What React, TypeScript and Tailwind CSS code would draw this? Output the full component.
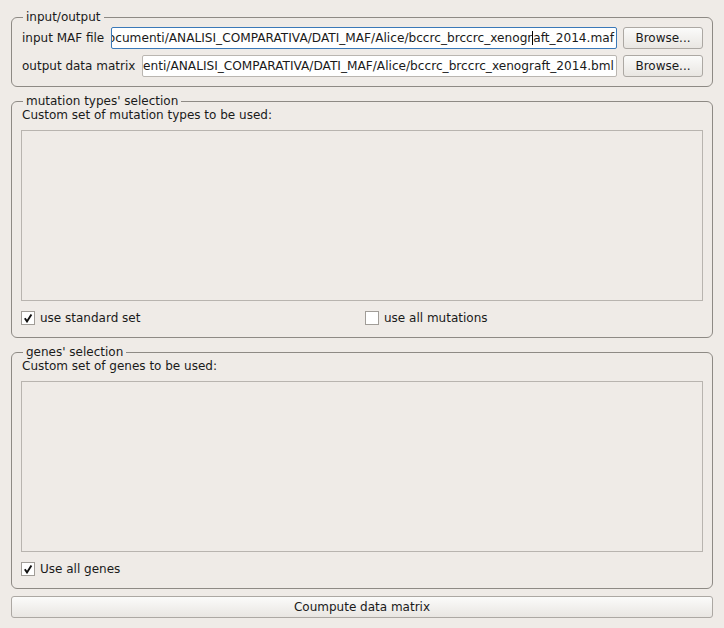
import React from 'react'

const font = { fontFamily: '"DejaVu Sans", "Liberation Sans", sans-serif' }

const Check = ({ checked, label }: { checked: boolean; label: string }) => (
  <label className="flex items-center gap-[5px] h-[16px] leading-[14px]">
    <span className="w-[14px] h-[14px] border border-[#a19d98] bg-white flex items-center justify-center">
      {checked && (
        <svg width="10" height="10" viewBox="0 0 10 10">
          <path d="M1.8 5.2 L4 8.4 L8.4 1.4" fill="none" stroke="#111" strokeWidth="1.9" />
        </svg>
      )}
    </span>
    <span>{label}</span>
  </label>
)

const Group = ({ title, children, className = '' }: { title: string; children: React.ReactNode; className?: string }) => (
  <fieldset className={`min-w-0 border border-[#8e8a85] rounded-[6px] px-[9px] ${className}`}>
    <legend className="ml-[2px] px-[3px] leading-[14px]">{title}</legend>
    {children}
  </fieldset>
)

const Field = ({ text, focused, caretAt }: { text: string; focused?: boolean; caretAt?: number }) => (
  <div
    className={`flex-1 min-w-0 h-[22px] bg-white border rounded-[2px] flex justify-end items-center overflow-hidden pr-[2px] text-[12.15px] ${
      focused ? 'border-[#3b79b8]' : 'border-[#bab6b1]'
    }`}
  >
    <span className="whitespace-nowrap leading-[14px]">
      {caretAt !== undefined ? (
        <>
          {text.slice(0, caretAt)}
          <span className="inline-block w-0 h-[14px] border-l border-black align-[-3px]" />
          {text.slice(caretAt)}
        </>
      ) : (
        text
      )}
    </span>
  </div>
)

const Button = ({ children, className = '' }: { children: React.ReactNode; className?: string }) => (
  <button
    className={`h-[22px] border border-[#aca8a3] rounded-[3px] bg-gradient-to-b from-[#fbfbfa] to-[#e9e6e2] leading-[14px] ${className}`}
  >
    {children}
  </button>
)

const App = () => {
  const maf = '/home/alice/Documenti/ANALISI_COMPARATIVA/DATI_MAF/Alice/bccrc_brccrc_xenograft_2014.maf'
  const bml = '/home/alice/Documenti/ANALISI_COMPARATIVA/DATI_MAF/Alice/bccrc_brccrc_xenograft_2014.bml'
  return (
    <div className="w-[724px] h-[628px] bg-[#efebe7] text-[12px] text-[#1a1a1a] px-[11px] pt-[10px] flex flex-col gap-[7px]" style={font}>
      <Group title="input/output" className="pt-[3px] pb-[9px]">
        <div className="flex flex-col gap-[6px]">
          <div className="flex items-center gap-[7px]">
            <span className="pl-[1px] shrink-0">input MAF file</span>
            <Field text={maf} focused caretAt={maf.length - 12} />
            <Button className="w-[80px] shrink-0 ml-[-1px]">Browse...</Button>
          </div>
          <div className="flex items-center gap-[7px]">
            <span className="pl-[1px] shrink-0">output data matrix</span>
            <Field text={bml} />
            <Button className="w-[80px] shrink-0 ml-[-1px]">Browse...</Button>
          </div>
        </div>
      </Group>

      <Group title="mutation types' selection" className="pb-[11px] flex flex-col">
        <div className="leading-[14px] pl-[1px]">Custom set of mutation types to be used:</div>
        <div className="mt-[8px] h-[171px] border border-[#b8b4af] bg-[#efebe7]" />
        <div className="mt-[9px] grid grid-cols-2 gap-x-[6px]">
          <Check checked label="use standard set" />
          <Check checked={false} label="use all mutations" />
        </div>
      </Group>

      <Group title="genes' selection" className="pb-[11px] flex flex-col">
        <div className="leading-[14px] pl-[1px]">Custom set of genes to be used:</div>
        <div className="mt-[8px] h-[171px] border border-[#b8b4af] bg-[#efebe7]" />
        <div className="mt-[9px]">
          <Check checked label="Use all genes" />
        </div>
      </Group>

      <Button className="w-full">Coumpute data matrix</Button>
    </div>
  )
}

export default App
